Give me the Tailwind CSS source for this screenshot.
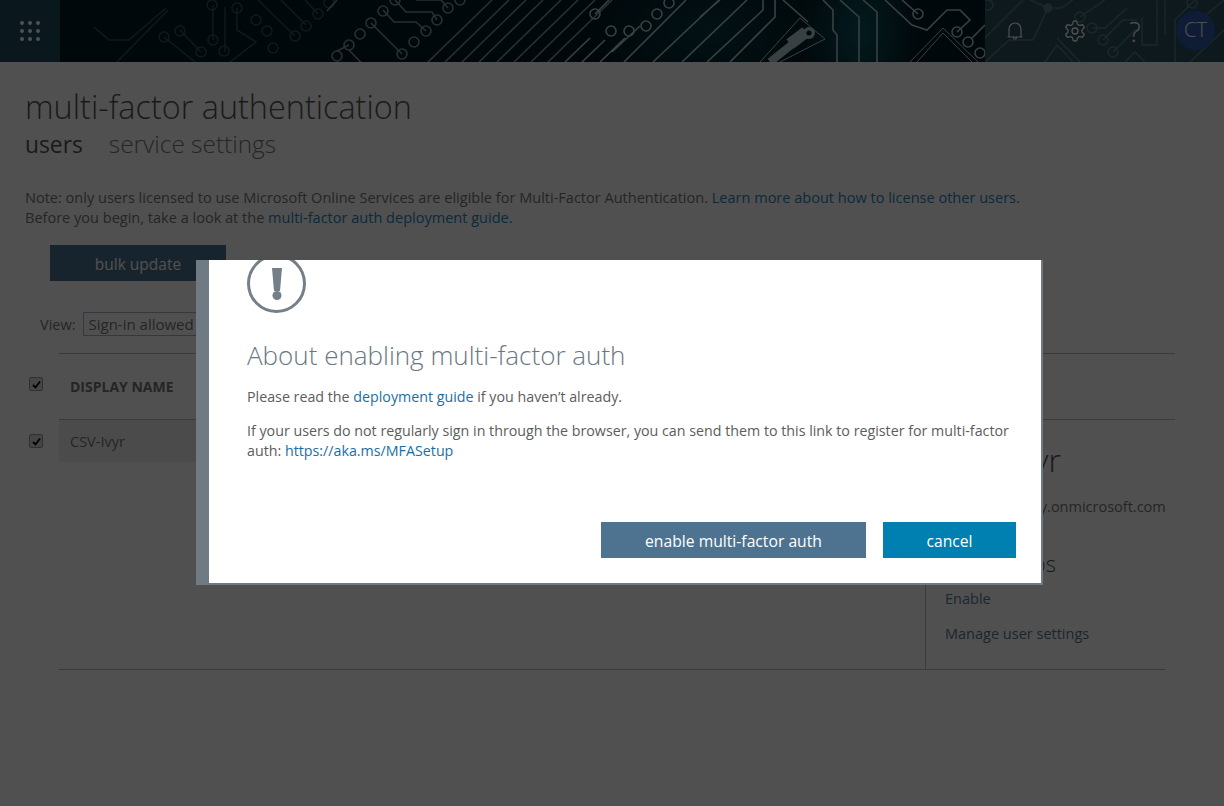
<!DOCTYPE html>
<html lang="en">
<head>
  <meta charset="UTF-8">
  <title>multi-factor authentication</title>
  <script src="https://cdn.jsdelivr.net/npm/@tailwindcss/browser@4"></script>
</head>
<body class="relative h-[806px] w-[1224px] overflow-hidden bg-white font-['Open_Sans','Noto_Sans',sans-serif] text-[14.54px] leading-[20px] text-[#777]">

  <!-- Top bar -->
  <header class="relative flex h-[62px] items-center overflow-hidden bg-[#041a26]">
    <svg class="absolute inset-0" width="1224" height="62" viewBox="0 0 1224 62">
      <defs>
        <radialGradient id="glow" cx="0.5" cy="0.5" r="0.5">
          <stop offset="0" stop-color="#0d7076" stop-opacity="0.7"/>
          <stop offset="1" stop-color="#0d7076" stop-opacity="0"/>
        </radialGradient>
      </defs>
      <rect x="590" y="-40" width="240" height="142" fill="url(#glow)" opacity="0.5"/>
      <rect x="800" y="-60" width="120" height="182" fill="url(#glow)"/>

      <!-- dim traces on the left -->
      <g fill="none" stroke="#37505c" stroke-width="1.5">
        <path d="M94 27 109 40H129L166 8"/>
        <path d="M168 10 117 62"/>
        <path d="M164 37 195 62"/>
        <path d="M180 30 201 52"/>
        <path d="M213 5V40M225 7V52"/>
        <path d="M237 8V30L256 42 230 62"/>
        <path d="M258 0 295 36M281 0 306 25M305 0 318 14"/>
        <circle cx="164" cy="37" r="5"/><circle cx="180" cy="31" r="5"/><circle cx="201" cy="52" r="5"/>
        <circle cx="213" cy="40" r="5"/><circle cx="212" cy="5" r="5"/><circle cx="224" cy="51" r="5"/>
        <circle cx="237" cy="8" r="5"/><circle cx="256" cy="20" r="5"/><circle cx="267" cy="31" r="5"/>
        <circle cx="273" cy="48" r="5"/><circle cx="295" cy="36" r="5"/><circle cx="306" cy="26" r="5"/>
        <circle cx="318" cy="14" r="5"/><circle cx="329" cy="3" r="5"/>
      </g>

      <!-- middle traces -->
      <g fill="none" stroke="#7f98a2" stroke-width="1.6">
        <path d="M337 51 349 45M349 50 372 74M371 23 402 54M327 11 337 0"/>
        <path d="M383 10 394 22H416L426 31"/>
        <path d="M395 0 406 12H432L437 20"/>
        <path d="M416 0H441L448 8"/>
        <circle cx="337" cy="56" r="5"/><circle cx="349" cy="45" r="5"/><circle cx="360" cy="34" r="5"/>
        <circle cx="371" cy="23" r="5"/><circle cx="383" cy="11" r="5"/><circle cx="395" cy="0" r="5"/>
        <circle cx="402" cy="54" r="5"/><circle cx="414" cy="42" r="5"/><circle cx="426" cy="31" r="5"/>
        <circle cx="437" cy="20" r="5"/><circle cx="448" cy="8" r="5"/><circle cx="460" cy="0" r="5"/>
        <path d="M428 62 492 0M445 62 509 0M462 62 526 0M479 62 543 0M497 62 561 0M514 62 578 0M531 62 595 0M548 62 612 0"/>
      </g>

      <!-- brighter traces on the right -->
      <g fill="none" stroke="#b5cbd3" stroke-width="1.6">
        <path d="M565 62 590 38M582 62 605 40M600 62 625 38M612 52 640 26M595 14 609 0"/>
        <circle cx="595" cy="14" r="5"/><circle cx="611" cy="31" r="5"/><circle cx="629" cy="31" r="5"/>
        <circle cx="646" cy="26" r="5"/><circle cx="657" cy="14" r="5"/><circle cx="669" cy="3" r="5"/>
        <path d="M624 62 686 0M653 62 719 0M682 62 747 0M700 17 720 0"/>
        <path d="M707 62 763 10V0M730 62 775 17V0M783 0 808 22"/>
        <path d="M823 0 833 10V30L837 35V62M840 0 859 17V62M863 0 877 12V62"/>
        <path d="M885 0 912 25 927 30 947 10H960L970 20 957 32M902 0 918 14M972 38 985 25"/>
        <circle cx="918" cy="14" r="5"/><circle cx="957" cy="32" r="5"/><circle cx="968" cy="42" r="5"/><circle cx="980" cy="53" r="5"/>
        <g stroke-width="1">
          <path d="M910 62 943 28 978 62M917 62 943 33 972 62"/>
          <path d="M760 62 800 18 825 39 780 62"/>
        </g>
      </g>

      <!-- key -->
      <path d="M770 62 795 42" stroke="#b5cbd3" stroke-width="8" fill="none"/>
      <path d="M790 44 806 32" stroke="#b5cbd3" stroke-width="12" fill="none"/>
      <circle cx="809" cy="33" r="6" fill="#b5cbd3"/>
      <circle cx="809" cy="33" r="2.500" fill="#041a26"/>
    </svg>

    <!-- App launcher tile -->
    <div class="relative flex h-[62px] w-[60px] items-center justify-center bg-[#265366]/85">
      <div class="grid grid-cols-3 gap-[4px]">
        <span class="h-[4px] w-[4px] rounded-full bg-white"></span><span class="h-[4px] w-[4px] rounded-full bg-white"></span><span class="h-[4px] w-[4px] rounded-full bg-white"></span>
        <span class="h-[4px] w-[4px] rounded-full bg-white"></span><span class="h-[4px] w-[4px] rounded-full bg-white"></span><span class="h-[4px] w-[4px] rounded-full bg-white"></span>
        <span class="h-[4px] w-[4px] rounded-full bg-white"></span><span class="h-[4px] w-[4px] rounded-full bg-white"></span><span class="h-[4px] w-[4px] rounded-full bg-white"></span>
      </div>
    </div>

    <!-- Right side icons -->
    <div class="relative ml-auto flex h-[62px] w-[239px] items-center bg-[#2c505c] pl-[20px] text-white">
      <svg class="absolute left-0 top-0" width="239" height="62" viewBox="0 0 239 62" fill="none" stroke="#5a7c88" stroke-width="1.4">
        <path d="M0 38 38 0M0 62 24 40H48L63 8M63 8 45 0M63 8H76L88 0M95 17 120 0"/>
        <path d="M107 28H120L142 8M118 40 138 20H152M128 52 150 30H155"/>
        <path d="M157 17V45H172V0M180 0V35M190 62V20L210 0"/>
        <path d="M60 62 72 45 88 62M72 38 95 62M140 62 150 52 160 62M205 62 239 30M215 20 239 0"/>
        <circle cx="95" cy="17" r="5"/><circle cx="107" cy="28" r="5"/><circle cx="118" cy="40" r="5"/><circle cx="128" cy="52" r="5"/><circle cx="207" cy="3" r="5"/><circle cx="3" cy="5" r="5"/>
        <circle cx="63" cy="8" r="4" fill="#5a7c88"/>
      </svg>
      <svg class="relative" width="20" height="22" viewBox="0 0 20 22" fill="none" stroke="#fff" stroke-width="1.2">
        <path d="M4 17V9a6 6 0 0 1 12 0v8M2.500 17H17.500M8.500 17.500a1.500 1.500 0 0 0 3 0"/>
      </svg>
      <svg class="relative ml-[38px]" width="24" height="24" viewBox="0 0 24 24" fill="none" stroke="#fff" stroke-width="1.3">
        <path d="M12.22 2h-.44a2 2 0 0 0-2 2v.18a2 2 0 0 1-1 1.73l-.43.25a2 2 0 0 1-2 0l-.15-.08a2 2 0 0 0-2.730.73l-.22.38a2 2 0 0 0 .73 2.730l.15.1a2 2 0 0 1 1 1.720v.51a2 2 0 0 1-1 1.740l-.15.09a2 2 0 0 0-.73 2.730l.22.38a2 2 0 0 0 2.730.73l.15-.08a2 2 0 0 1 2 0l.43.25a2 2 0 0 1 1 1.730V20a2 2 0 0 0 2 2h.44a2 2 0 0 0 2-2v-.18a2 2 0 0 1 1-1.730l.43-.25a2 2 0 0 1 2 0l.15.08a2 2 0 0 0 2.730-.73l.22-.39a2 2 0 0 0-.73-2.730l-.15-.08a2 2 0 0 1-1-1.740v-.5a2 2 0 0 1 1-1.740l.15-.09a2 2 0 0 0 .73-2.730l-.22-.38a2 2 0 0 0-2.730-.73l-.15.08a2 2 0 0 1-2 0l-.43-.25a2 2 0 0 1-1-1.730V4a2 2 0 0 0-2-2z"/>
        <circle cx="12" cy="12" r="3"/>
      </svg>
      <span class="relative ml-[41px] w-[14px] text-center text-[27px] font-light leading-none">?</span>
      <span class="relative ml-[34px] flex h-[39px] w-[39px] -translate-y-[1px] items-center justify-center rounded-full bg-[#3059ac] text-[20px] font-light">CT</span>
    </div>
  </header>

  <!-- Page -->
  <main class="pl-[25px]">
    <h1 class="mt-[20px] text-[32.400px] font-light leading-[48px] text-[#555]">multi-factor authentication</h1>
    <nav class="flex text-[24.400px] font-light leading-[28px] text-[#777]">
      <span class="translate-y-[1px] text-[22.800px] font-normal text-[#555]">users</span>
      <span class="ml-[26px]">service settings</span>
    </nav>

    <p class="mt-[29px]">
      Note: only users licensed to use Microsoft Online Services are eligible for Multi-Factor Authentication.
      <a class="text-[#2a86bd]">Learn more about how to license other users.</a><br>
      Before you begin, take a look at the <a class="text-[#2a86bd]">multi-factor auth deployment guide.</a>
    </p>

    <button class="ml-[25px] mt-[18px] h-[36px] w-[176px] bg-[#4d7391] pt-[1px] text-[15.500px] text-white">bulk update</button>

    <div class="ml-[15px] mt-[31px] flex items-center gap-[7px]">
      <span class="pt-[2px] text-[14.500px]">View:</span>
      <span class="flex h-[24px] w-[140px] items-center border border-[#9fb6c8] pl-[5px] text-[15px]">Sign-in allowed</span>
    </div>

    <!-- Users table + detail pane -->
    <div class="relative mt-[17px] w-[1150px]">
      <div class="flex">
        <div class="w-[34px] pl-[4px] pt-[24px]">
          <span class="flex h-[14px] w-[14px] items-center justify-center rounded-[2px] border border-[#999] bg-[#ddd]">
            <svg width="9" height="9" viewBox="0 0 9 9"><path d="M1 5l2.500 2.500L8 1.500" fill="none" stroke="#000" stroke-width="1.800"/></svg>
          </span>
        </div>
        <div class="flex h-[67px] flex-1 items-center border-y border-[#bbb] pl-[11px]">
          <span class="text-[14px] font-bold text-[#777]">DISPLAY NAME</span>
        </div>
      </div>
      <div class="flex">
        <div class="flex h-[42px] w-[34px] items-center pl-[4px]">
          <span class="flex h-[14px] w-[14px] items-center justify-center rounded-[2px] border border-[#999] bg-[#ddd]">
            <svg width="9" height="9" viewBox="0 0 9 9"><path d="M1 5l2.500 2.500L8 1.500" fill="none" stroke="#000" stroke-width="1.800"/></svg>
          </span>
        </div>
        <div class="flex h-[42px] w-[500px] items-center bg-[#f0f0f0] pb-[1px] pl-[11px]">CSV-Ivyr</div>
        <aside class="ml-auto mr-[10px] h-[249px] w-[240px] border-l border-[#bbb] pl-[19px] pt-[20px]">
          <h2 class="text-[32px] font-light leading-[40px] text-[#555]">CSV-Ivyr</h2>
          <p class="mt-[17px] whitespace-nowrap text-[14.500px]">CSVIvyr@myivy.onmicrosoft.com</p>
          <h3 class="mt-[31px] text-[22px] font-light leading-[30px] text-[#555]">quick steps</h3>
          <a class="mt-[11px] block text-[14.500px] text-[#5a7a9a]">Enable</a>
          <a class="mt-[15px] block text-[14.500px] text-[#5a7a9a]">Manage user settings</a>
        </aside>
      </div>
      <div class="ml-[34px] mr-[10px] border-t border-[#bbb]"></div>
    </div>
  </main>

  <!-- Dim layer -->
  <div class="absolute inset-0 bg-black/[0.686]"></div>

  <!-- Dialog -->
  <div role="dialog" class="absolute left-[196px] top-[260px] flex h-[325px] w-[847px] overflow-hidden border-b-2 border-r-2 border-[#6f7a83] bg-white">
    <div class="w-[13px] shrink-0 bg-[#6f7a83]"></div>
    <div class="flex-1 pl-[38px] pr-[25px]">
      <svg class="-mt-[8px]" width="60" height="62" viewBox="0 0 60 62">
        <circle cx="29.500" cy="31.500" r="28" fill="none" stroke="#747f88" stroke-width="3"/>
        <path d="M25 16H35L33 39H27z" fill="#747f88"/>
        <circle cx="30" cy="43.500" r="4.500" fill="#747f88"/>
      </svg>
      <h2 class="mt-[21px] text-[26px] font-light leading-[40px] text-[#6a7784]">About enabling multi-factor auth</h2>
      <p class="mt-[12px] text-[14.250px] text-[#5c5c5c]">Please read the <a class="text-[#1a6ea8]">deployment guide</a> if you haven’t already.</p>
      <p class="mt-[14px] text-[14.250px] text-[#5c5c5c]">If your users do not regularly sign in through the browser, you can send them to this link to register for multi-factor auth: <a class="text-[#1a6ea8]">https://aka.ms/MFASetup</a></p>
      <div class="mt-[61px] flex justify-end gap-[17px]">
        <button class="h-[36px] w-[265px] bg-[#4d7391] pt-[1px] text-[15.700px] text-white">enable multi-factor auth</button>
        <button class="h-[36px] w-[133px] bg-[#0080b0] pt-[1px] text-[15.700px] text-white">cancel</button>
      </div>
    </div>
  </div>
</body>
</html>
